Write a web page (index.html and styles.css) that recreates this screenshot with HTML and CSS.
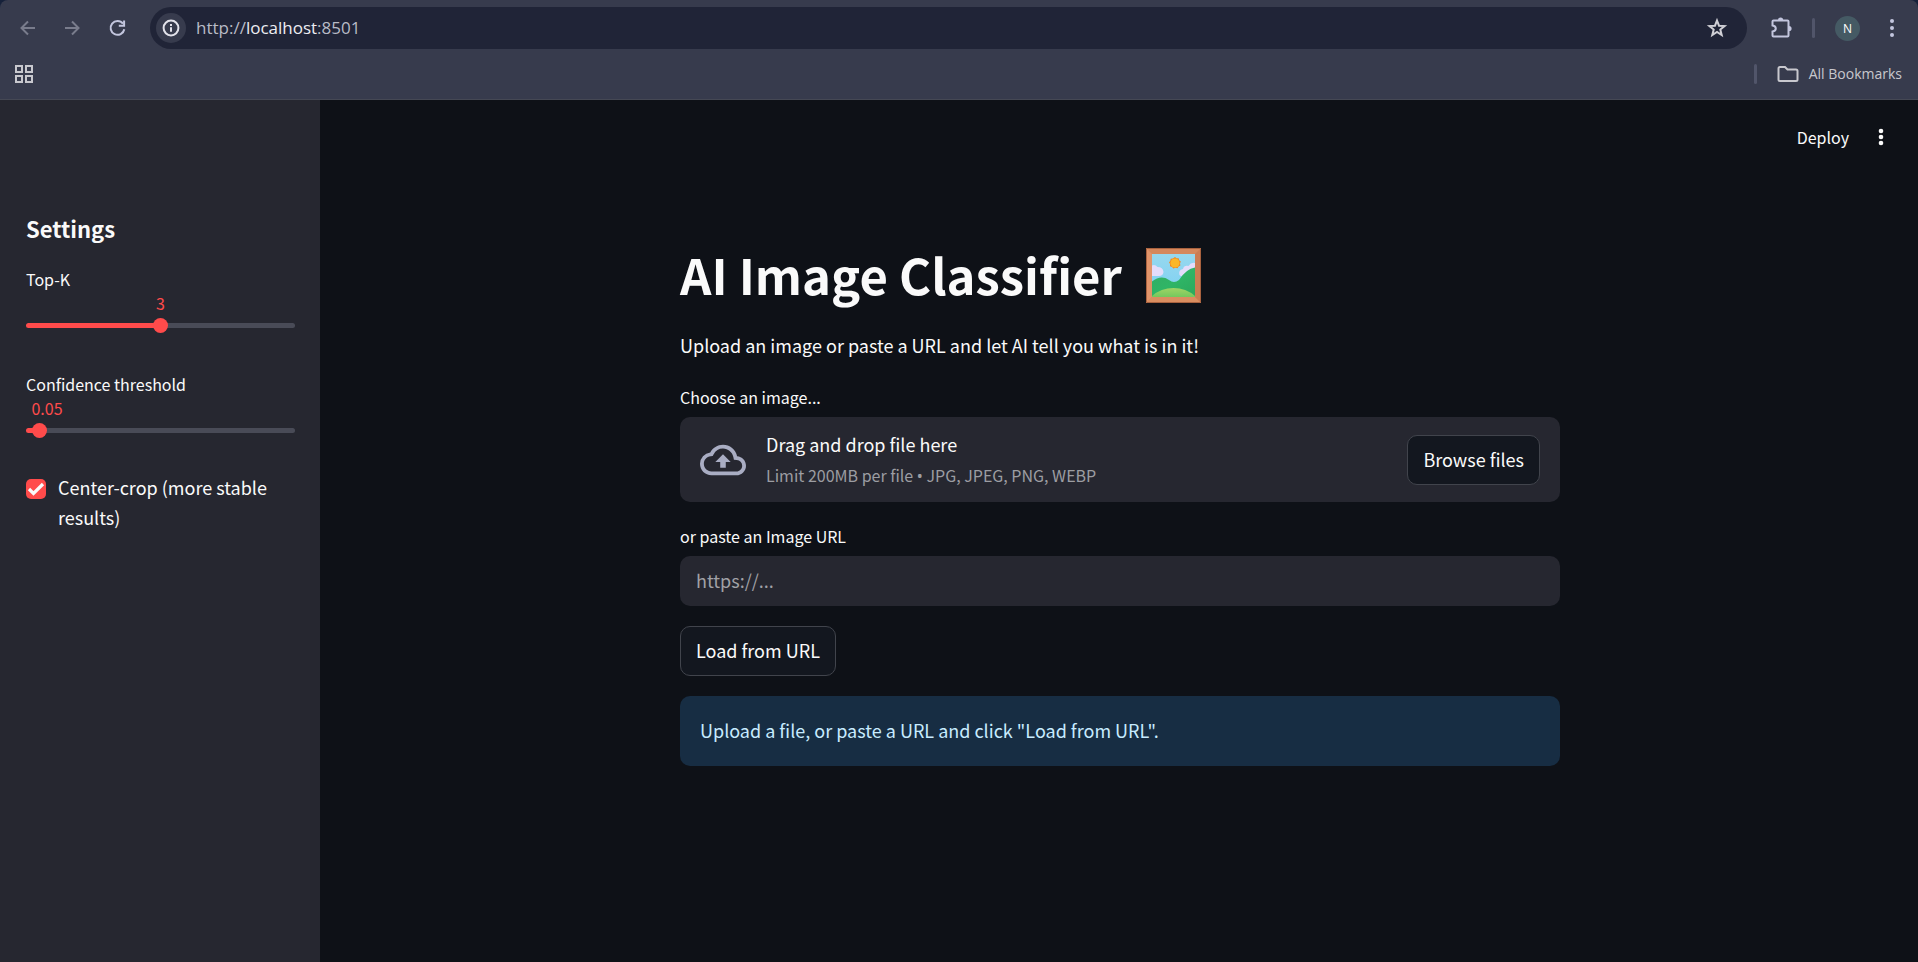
FILE: index.html
```html
<!DOCTYPE html>
<html lang="en">
<head>
<meta charset="utf-8">
<title>AI Image Classifier</title>
<link rel="stylesheet" href="styles.css">
</head>
<body>
<div class="window">
  <header class="chrome">
    <div class="toolbar">
      <nav class="nav-buttons" aria-label="Navigation">
        <button class="icon-btn dim" aria-label="Back"><svg width="20" height="20" viewBox="0 0 20 20"><path d="M18 10H5M11 3.500L4.500 10L11 16.500"/></svg></button>
        <button class="icon-btn dim" aria-label="Forward"><svg width="20" height="20" viewBox="0 0 20 20"><path d="M3 10H16M10 3.500L16.500 10L10 16.500"/></svg></button>
        <button class="icon-btn" aria-label="Reload"><svg width="20" height="20" viewBox="0 0 20 20"><path d="M17.300 11.200A6.900 6.900 0 1 1 16 5.700"/><path d="M17.100 2.500V7.800H11.800"/></svg></button>
      </nav>
      <div class="omnibox">
        <button class="site-info" aria-label="Site information"><svg width="20" height="20" viewBox="0 0 20 20"><circle cx="10" cy="10" r="7.400"/><path d="M10 9.200V13.800M10 6V8"/></svg></button>
        <span class="url">http://<span class="host">localhost</span>:8501</span>
        <button class="icon-btn star" aria-label="Bookmark this tab"><svg width="22" height="22" viewBox="0 0 22 22"><path d="M11 3.500L13 8.700L18.600 9L14.300 12.600L15.700 18L11 15L6.300 18L7.700 12.600L3.400 9L9 8.700Z"/></svg></button>
      </div>
      <div class="toolbar-end">
        <button class="icon-btn" aria-label="Extensions"><svg width="24" height="24" viewBox="0 0 24 24"><path d="M4.500 4.500H18.500Q19.500 4.500 19.500 5.500V19.500Q19.500 20.500 18.500 20.500H4.500Q3.500 20.500 3.500 19.500V15.500Q6.800 15 6.800 12.500Q6.800 10 3.500 9.500V5.500Q3.500 4.500 4.500 4.500Z"/><path class="solid" d="M9 4A2.600 2.600 0 0 1 14.200 4ZM20 9.900A2.600 2.600 0 0 1 20 15.100Z"/></svg></button>
        <span class="divider"></span>
        <button class="avatar" aria-label="Profile">N</button>
        <button class="icon-btn" aria-label="Browser menu"><svg class="dots" width="6" height="20" viewBox="0 0 6 20"><circle cx="3" cy="3" r="2"/><circle cx="3" cy="10" r="2"/><circle cx="3" cy="17" r="2"/></svg></button>
      </div>
    </div>
    <div class="bookmarks">
      <button class="icon-btn light" aria-label="Apps"><svg width="20" height="20" viewBox="0 0 20 20"><path d="M2 2H8V8H2ZM12 2H18V8H12ZM2 12H8V18H2ZM12 12H18V18H12Z"/></svg></button>
      <div class="bookmarks-end">
        <span class="divider"></span>
        <button class="all-bookmarks"><svg width="22" height="18" viewBox="0 0 22 18"><path d="M3 2H8L10.500 4.500H19Q20.500 4.500 20.500 6V14.500Q20.500 16 19 16H3Q1.500 16 1.500 14.500V3.500Q1.500 2 3 2Z"/></svg>All Bookmarks</button>
      </div>
    </div>
  </header>

  <div class="app">
    <aside class="sidebar">
      <h2 class="sidebar-title">Settings</h2>
      <div class="slider" style="--value: 50%">
        <label class="field-label" for="topk">Top-K</label>
        <div class="slider-value"><output for="topk">3</output></div>
        <div class="slider-track"><input id="topk" type="range" min="1" max="5" value="3"></div>
      </div>
      <div class="slider" style="--value: 5%">
        <label class="field-label" for="threshold">Confidence threshold</label>
        <div class="slider-value"><output for="threshold">0.05</output></div>
        <div class="slider-track"><input id="threshold" type="range" min="0" max="1" step="0.01" value="0.05"></div>
      </div>
      <label class="check"><input type="checkbox" checked><span>Center-crop (more stable results)</span></label>
    </aside>

    <main class="main">
      <div class="app-bar">
        <button class="deploy">Deploy</button>
        <button class="icon-btn white" aria-label="App menu"><svg class="dots" width="6" height="20" viewBox="0 0 6 20"><circle cx="3" cy="4" r="2.300"/><circle cx="3" cy="10" r="2.300"/><circle cx="3" cy="16" r="2.300"/></svg></button>
      </div>
      <div class="content">
        <h1 class="title">AI Image Classifier
          <svg class="picture" viewBox="0 0 55 55" role="img" aria-label="Framed picture">
            <defs>
              <linearGradient id="sky" x1="0" y1="0" x2="0" y2="1"><stop offset="0" stop-color="#97d8ee"/><stop offset="1" stop-color="#7cd0f4"/></linearGradient>
              <linearGradient id="hill" x1="0" y1="0" x2="1" y2="1"><stop offset="0" stop-color="#35ab63"/><stop offset=".5" stop-color="#2fb566"/><stop offset="1" stop-color="#2ba85c"/></linearGradient>
              <linearGradient id="front" x1="0" y1="0" x2="0" y2="1"><stop offset="0" stop-color="#a0d464"/><stop offset="1" stop-color="#74c85e"/></linearGradient>
            </defs>
            <path fill="#d5885c" d="M0 0H55V55H0Z"/>
            <path fill="#e0946a" d="M0 0L6 6V49L0 55Z"/>
            <path fill="#da8e60" d="M0 55L6 49H49L55 55Z"/>
            <path fill="#cb7c52" d="M55 0L49 6V49L55 55Z"/>
            <path fill="none" stroke="#a9623f" d="M.5 .5H54.500V54.500H.5Z"/>
            <path fill="url(#sky)" d="M6 6H49V49H6Z"/>
            <path fill="#e4dcfa" d="M6 17.500Q9 16 11.500 19Q17 19 17.500 24Q17 28 13 28H6ZM49 15Q45 14 42.500 18Q38 17 37 21Q32 22 33.500 27Q35 29 39 28L49 20Z"/>
            <path fill="#f2861f" d="M29 9L30.600 10.300L32.700 10.300L33.200 12.300L34.800 13.600L34 15.500L34.400 17.500L32.600 18.500L31.500 20.300L29.500 19.800L27.400 20.600L26 19L24 18.200L24.100 16.100L23 14.400L24.300 12.800L24.700 10.700L26.800 10.500Z"/>
            <circle cx="29" cy="15" r="4.600" fill="#fbb728"/>
            <path fill="url(#hill)" d="M6 33.500Q15 26.500 23 32Q28 36 33 32Q40 21 49 19.500V49H6Z"/>
            <path fill="url(#front)" d="M6 48Q15 40 27.500 40Q40 40 49 48V49H6Z"/>
          </svg>
        </h1>
        <p class="intro">Upload an image or paste a URL and let AI tell you what is in it!</p>

        <div class="field">
          <span class="field-label" id="upload-label">Choose an image...</span>
          <section class="dropzone" aria-labelledby="upload-label">
            <svg class="cloud" width="46" height="46" viewBox="0 0 24 24"><path d="M19.350 10.040A7.490 7.490 0 0 0 12 4C9.110 4 6.600 5.640 5.350 8.040A5.994 5.994 0 0 0 0 14c0 3.310 2.690 6 6 6h13c2.760 0 5-2.240 5-5 0-2.640-2.050-4.780-4.650-4.960zM19 18H6c-2.210 0-4-1.790-4-4 0-2.050 1.530-3.760 3.560-3.970l1.070-.11.5-.95A5.469 5.469 0 0 1 12 6c2.620 0 4.880 1.860 5.390 4.430l.3 1.500 1.530.11A2.980 2.980 0 0 1 22 15c0 1.650-1.350 3-3 3zM8 13h2.550v3h2.900v-3H16l-4-4z"/></svg>
            <div class="drop-text">
              <span class="drop-main">Drag and drop file here</span>
              <span class="drop-hint">Limit 200MB per file <span class="bullet">•</span> JPG, JPEG, PNG, WEBP</span>
            </div>
            <button class="button">Browse files</button>
          </section>
        </div>

        <div class="field">
          <label class="field-label" for="image-url">or paste an Image URL</label>
          <input class="text-input" id="image-url" type="text" placeholder="https://...">
        </div>

        <button class="button">Load from URL</button>
        <div class="alert" role="status">Upload a file, or paste a URL and click "Load from URL".</div>
      </div>
    </main>
  </div>
</div>
</body>
</html>
```

FILE: styles.css
```css
* {
  box-sizing: border-box;
}

body {
  margin: 0;
  background: #16213a;
  color: #fafafa;
  font-family: "Noto Sans CJK SC", "Noto Sans", sans-serif;
  font-size: 18px;
  line-height: 30px;
}

button,
input {
  font: inherit;
  color: inherit;
}

button {
  padding: 0;
  border: 0;
  background: none;
}

svg {
  display: block;
  flex: none;
}

.window {
  display: flex;
  flex-direction: column;
  min-height: 100vh;
}

/* Browser chrome */

.chrome {
  background: #373b4d;
  border-bottom: 1px solid #454854;
  border-radius: 8px 8px 0 0;
  font-family: "Open Sans", "Noto Sans", sans-serif;
}

.toolbar {
  display: flex;
  align-items: center;
  padding: 7px 18px 7px 17px;
}

.nav-buttons {
  display: flex;
  gap: 25px;
  width: 133px;
}

.icon-btn {
  flex: none;
  color: #c3c6de;
}

.icon-btn svg,
.site-info svg,
.all-bookmarks svg {
  fill: none;
  stroke: currentColor;
  stroke-width: 2;
}

.icon-btn .dots,
.icon-btn .solid {
  fill: currentColor;
  stroke: none;
}

.dim {
  color: #797c8c;
}

.light {
  color: #c8c8ce;
}

.white {
  color: #fafafa;
}

.omnibox {
  display: flex;
  flex: 1;
  align-items: center;
  gap: 10px;
  height: 42px;
  padding: 0 19px 0 6px;
  border-radius: 21px;
  background: #202437;
}

.site-info {
  display: grid;
  place-items: center;
  width: 30px;
  height: 30px;
  border-radius: 50%;
  background: #373b4d;
  color: #e2e2ea;
}

.url {
  flex: 1;
  color: #b9bbc6;
  font-size: 17px;
}

.host {
  color: #ededf2;
}

.star {
  color: #d0d0d6;
}

.toolbar-end {
  display: flex;
  align-items: center;
  padding: 0 5px 0 22px;
}

.divider {
  width: 3px;
  height: 20px;
  border-radius: 2px;
  background: #51556a;
}

.toolbar-end .divider {
  margin: 0 20px 0 19px;
}

.avatar {
  width: 25px;
  height: 25px;
  margin-right: 29px;
  border-radius: 50%;
  background: #455a64;
  color: #ffffff;
  font-size: 12px;
  line-height: 25px;
}

.bookmarks {
  display: flex;
  align-items: center;
  justify-content: space-between;
  height: 43px;
  padding: 0 16px 8px 14px;
}

.bookmarks-end {
  display: flex;
  align-items: center;
  gap: 20px;
}

.all-bookmarks {
  display: flex;
  align-items: center;
  gap: 10px;
  color: #c8c8ce;
  font-size: 14px;
}

/* App */

.app {
  display: flex;
  flex: 1;
}

.sidebar {
  flex: none;
  width: 320px;
  padding: 113px 25px 40px 26px;
  background: #262730;
}

.sidebar-title {
  margin: 0 0 22px;
  font-size: 22px;
  font-weight: 700;
  line-height: 30px;
}

.field-label {
  display: block;
  font-size: 16px;
  line-height: 28px;
}

.slider {
  margin-bottom: 42px;
}

.slider-value {
  position: relative;
  height: 20px;
  color: #ff4b4b;
  font-size: 16px;
  line-height: 20px;
}

.slider-value output {
  position: absolute;
  left: max(var(--value), 21px);
  transform: translateX(-50%);
}

.slider-track {
  display: flex;
  align-items: center;
  height: 5px;
  margin-top: 10px;
  border-radius: 3px;
  background: linear-gradient(to right, #ff4b4b var(--value), #494b57 var(--value));
}

.slider-track input {
  flex: 1;
  min-width: 0;
  height: 15px;
  margin: 0 -8px;
  background: none;
  appearance: none;
}

.slider-track input::-webkit-slider-thumb {
  width: 15px;
  height: 15px;
  border-radius: 50%;
  background: #ff4b4b;
  appearance: none;
}

.check {
  display: flex;
  align-items: flex-start;
  gap: 12px;
  margin-top: -3px;
}

.check input {
  flex: none;
  width: 20px;
  height: 20px;
  margin: 7px 0 0;
  border-radius: 5px;
  background: #ff4b4b url("data:image/svg+xml,%3Csvg xmlns='http://www.w3.org/2000/svg' viewBox='0 0 20 20'%3E%3Cpath d='M3 10L7.500 14.500L17 5' fill='none' stroke='%23fafafa' stroke-width='3.200'/%3E%3C/svg%3E");
  appearance: none;
}

.main {
  flex: 1;
  padding-left: 2px;
  background: #0e1117;
}

.app-bar {
  display: flex;
  align-items: center;
  justify-content: flex-end;
  gap: 29px;
  height: 75px;
  padding: 0 34px 1px 0;
}

.deploy {
  font-size: 16px;
}

.content {
  display: flex;
  flex-direction: column;
  align-items: flex-start;
  gap: 20px;
  width: 100%;
  max-width: 880px;
  margin: 0 auto;
  padding: 66px 0 80px;
}

.title {
  display: flex;
  align-items: center;
  gap: 24px;
  margin: 0;
  font-size: 49px;
  font-weight: 700;
  line-height: 66px;
}

.picture {
  width: 55px;
  height: 55px;
  margin-top: 2px;
}

.intro {
  margin: 3px 0;
}

.field {
  width: 100%;
}

.field .field-label {
  margin-bottom: 6px;
}

.dropzone {
  display: flex;
  align-items: center;
  gap: 20px;
  padding: 12px 20px;
  border-radius: 10px;
  background: #262730;
}

.cloud {
  fill: #a9adc3;
}

.drop-text {
  display: flex;
  flex: 1;
  flex-direction: column;
}

.drop-main {
  line-height: 31px;
}

.drop-hint {
  color: #9c9da2;
  font-size: 16px;
}

.bullet {
  font-family: "Noto Sans", sans-serif;
  line-height: 1;
}

.button {
  height: 50px;
  padding: 0 15px 2px;
  border: 1px solid #41444c;
  border-radius: 10px;
  background: #13171f;
}

.text-input {
  display: block;
  width: 100%;
  height: 50px;
  padding: 0 16px 2px;
  border: 0;
  border-radius: 10px;
  background: #262730;
}

.text-input::placeholder {
  color: #a0a1a6;
  opacity: 1;
}

.alert {
  width: 100%;
  padding: 19px 20px 21px;
  border-radius: 10px;
  background: #172d43;
  color: #c7ebff;
}
```
